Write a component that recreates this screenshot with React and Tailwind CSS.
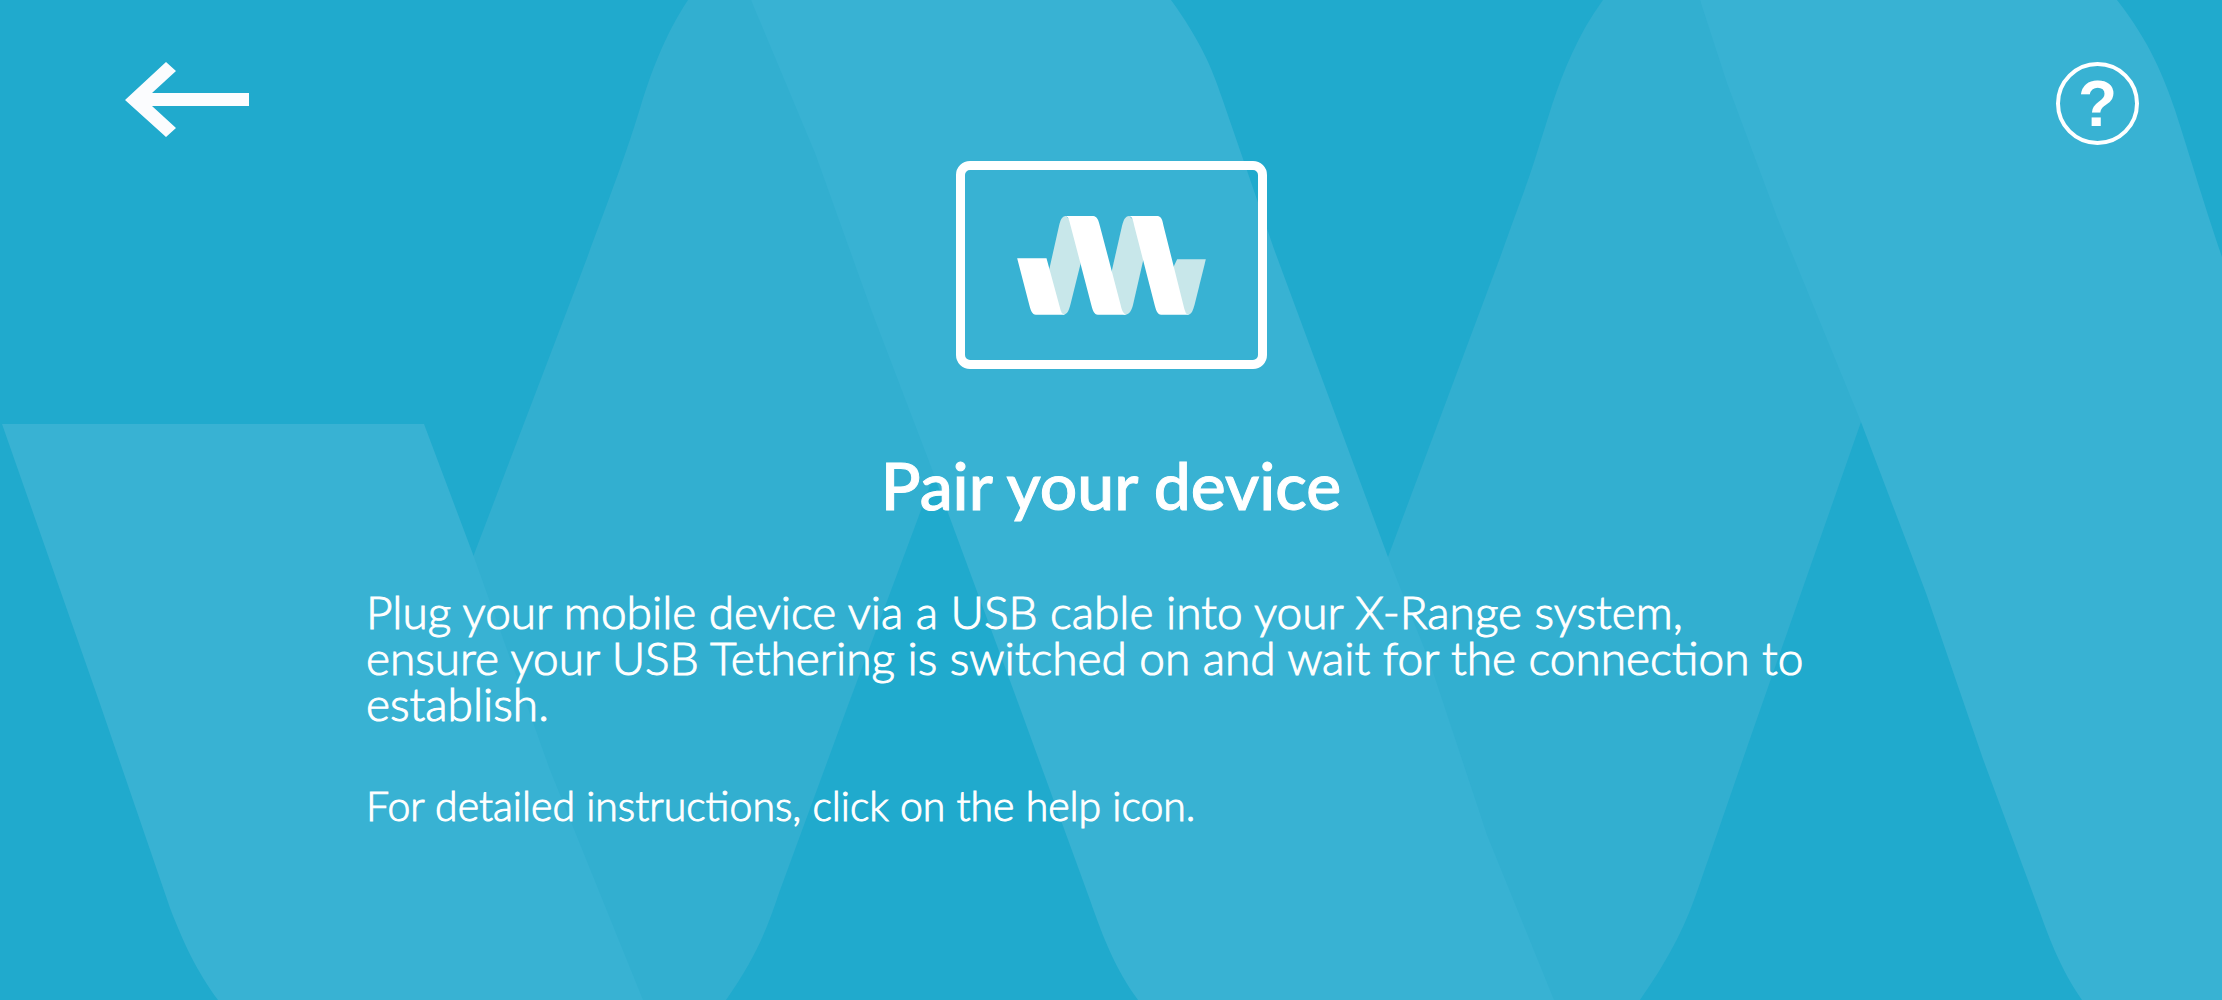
import React from 'react';

const Backdrop = () => (
    <svg
        className="absolute inset-0 h-full w-full"
        viewBox="0 0 2222 1000"
        preserveAspectRatio="xMidYMid slice"
        aria-hidden="true"
    >
        {/* Back folds of the ribbon */}
        <g fill="#32afd0">
            <path d="M688 0C664 36 650 76 641 105C630 142 618 176 581 274L473 557L440 700L600 1000H726C757 956 768 926 779 893L847 708L914 529L938 464L960 200L751 0Z" />
            <path d="M1603 0C1578 34 1563 72 1552 105L1540 143C1527 186 1516 212 1501 255L1388 557L1360 700L1500 1000H1640C1672 954 1686 924 1699 886L1752 733L1861 422L1860 200L1700 0Z" />
        </g>
        {/* Front folds */}
        <g fill="#38b2d3">
            <path d="M2 424H424L474 557L550 770L643 1000H218C196 970 184 944 170 908L99 701Z" />
            <path d="M751 0H1171C1200 40 1212 68 1222 98L1242 156L1274 249L1388 557L1430 663L1487 835L1554 1000H1138C1116 970 1104 940 1090 900L1020 708L930 464L872 312L815 153Z" />
            <path d="M1700 0H2117C2150 42 2164 78 2175 110C2190 156 2200 192 2222 257V1000H2082C2060 968 2050 940 2039 910L1983 759L1926 593L1861 422L1777 217L1727 83Z" />
        </g>
    </svg>
);

const BackArrow = () => (
    <svg className="h-[76px] w-[124px]" viewBox="0 0 124 76" fill="#fbfcfe" aria-hidden="true">
        <path d="M0 38L41 0L51 9L27 31H124V44H27L51 66L41 75Z" />
    </svg>
);

const Logo = () => (
    <svg className="h-[99px] w-[189px]" viewBox="232 201 566 297" aria-hidden="true">
        <g fill="#c8e7ea">
            <path d="M378 201C366 202 362 213 358 229L328 362L330 440L370 497C384 498 388 480 392 466L422 345L430 250Z" />
            <path d="M568 201C556 202 551 213 547 229L516 365L515 440L552 497C570 499 576 482 580 466L611 330L620 250Z" />
            <path d="M712 331H798L765 464C760 482 756 496 744 497L700 450L690 380L702 352Z" />
        </g>
        <g fill="#fff">
            <path d="M232 328H320L362 482C365 491 369 496 377 497H288C277 496 273 485 269 470Z" />
            <path d="M376 201H460C472 202 476 214 480 230L543 470C546 484 551 495 560 497H474C463 496 459 485 455 470L393 233C388 215 387 203 376 201Z" />
            <path d="M567 201H653C665 202 668 214 671 230L733 478C736 488 739 496 748 497H664C653 496 649 485 645 470L584 233C580 215 578 203 567 201Z" />
        </g>
    </svg>
);

const App = () => (
    <div className="relative min-h-screen overflow-hidden bg-[#20aacd] font-['Lato',sans-serif] text-white">
        <Backdrop />
        <div className="relative">
            <header className="flex items-start justify-between pt-[62px] pr-[83px] pl-[125px]">
                <button type="button" aria-label="Back">
                    <BackArrow />
                </button>
                <button
                    type="button"
                    aria-label="Help"
                    className="flex h-[83px] w-[83px] items-center justify-center rounded-full border-4 border-white font-['Liberation_Sans',sans-serif] text-[64px] leading-none font-bold"
                >
                    ?
                </button>
            </header>

            <main className="mt-4 flex flex-col items-center [-webkit-text-stroke:1px_white]">
                <div className="flex h-[208px] w-[311px] items-center justify-center rounded-[14px] border-9 border-white">
                    <Logo />
                </div>
                <h1 className="mt-19 text-[66px] leading-[80px] font-medium">Pair your device</h1>
                <div className="mt-16 w-full max-w-[1490px] space-y-14 pr-10 font-light">
                    <p className="text-[46px] leading-[46px]">
                        Plug your mobile device via a USB cable into your X-Range system, ensure your USB Tethering is
                        switched on and wait for the connection to establish.
                    </p>
                    <p className="text-[41px] leading-[46px]">
                        For detailed instructions, click on the help icon.
                    </p>
                </div>
            </main>
        </div>
    </div>
);

export default App;
